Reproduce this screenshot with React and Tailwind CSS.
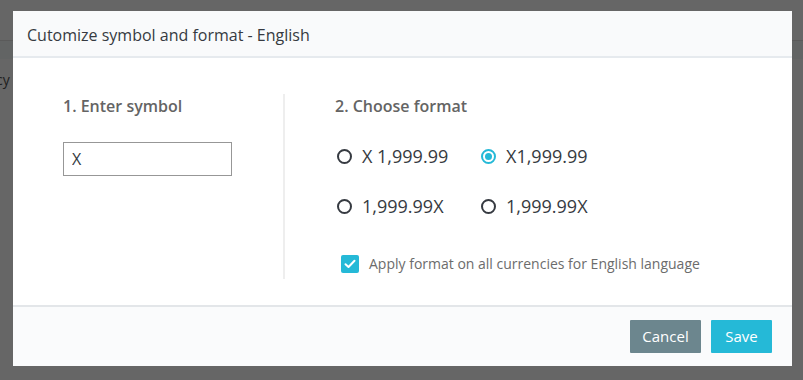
import { useState } from 'react';

const formats = [
  { id: 'x-space', label: 'X 1,999.99' },
  { id: 'x', label: 'X1,999.99' },
  { id: 'suffix', label: '1,999.99X' },
  { id: 'suffix-space', label: '1,999.99X' },
];

function Radio({ checked, label, onClick }) {
  return (
    <button onClick={onClick} className="h-[18px] flex items-center gap-[10px] text-[18px] text-[#363a41] leading-none">
      <span
        className={`w-[15px] h-[15px] rounded-full border-2 flex items-center justify-center ${
          checked ? 'border-[#25b9d7]' : 'border-[#363a41]'
        }`}
      >
        {checked && <span className="w-[7px] h-[7px] rounded-full bg-[#25b9d7]" />}
      </span>
      <span>{label}</span>
    </button>
  );
}

export default function App() {
  const [format, setFormat] = useState('x');
  const [symbol, setSymbol] = useState('X');
  const [applyAll, setApplyAll] = useState(true);

  return (
    <div className="relative w-[803px] h-[380px] overflow-hidden bg-[#666666] font-['Open_Sans',sans-serif]">
      {/* page behind the overlay */}
      <div className="pt-[40px]">
        <div className="h-[19px] border-t border-[#5a5a5a] bg-[#626464]" />
        <p className="pt-[10px] text-[14px] text-[#202020] -ml-[4px]">cy</p>
      </div>

      <div className="absolute left-[13px] top-[11px] w-[779px] h-[355px] bg-white flex flex-col">
        <div className="h-[47px] bg-[#f9fafb] border-b-2 border-[#e6eaee] flex items-center px-[14px]">
          <h2 className="text-[16px] text-[#363a41] pt-[2px]">Cutomize symbol and format - English</h2>
        </div>

        <div className="flex-1 flex pt-[36px] pb-[26px]">
          <div className="w-[272px] border-r-2 border-[#eeeeee] pl-[50px] pt-[2px]">
            <h3 className="text-[16px] font-semibold text-[#646464] leading-[20px]">1. Enter symbol</h3>
            <input
              value={symbol}
              onChange={(e) => setSymbol(e.target.value)}
              className="mt-[26px] w-[169px] h-[34px] border border-[#979797] px-[8px] text-[16px] text-[#363a41] outline-none"
            />
          </div>

          <div className="flex-1 pl-[50px] pt-[2px]">
            <h3 className="text-[16px] font-semibold text-[#646464] leading-[20px]">2. Choose format</h3>
            <div className="mt-[31px] grid grid-cols-[144px_auto] gap-y-[32px] pl-[2px] justify-start">
              {formats.map((f) => (
                <Radio key={f.id} label={f.label} checked={format === f.id} onClick={() => setFormat(f.id)} />
              ))}
            </div>
            <label className="mt-[39px] ml-[6px] flex items-center gap-[10px] text-[14px] leading-[20px] text-[#6c6c6c] cursor-pointer">
              <button
                onClick={() => setApplyAll(!applyAll)}
                className={`w-[18px] h-[18px] rounded-[2px] flex items-center justify-center ${
                  applyAll ? 'bg-[#25b9d7]' : 'border border-[#bbcdd2] bg-white'
                }`}
              >
                {applyAll && (
                  <svg width="12" height="10" viewBox="0 0 12 10" fill="none">
                    <path d="M1.5 5.2 4.5 8 10.5 1.8" stroke="white" strokeWidth="2" strokeLinecap="round" strokeLinejoin="round" />
                  </svg>
                )}
              </button>
              Apply format on all currencies for English language
            </label>
          </div>
        </div>

        <div className="h-[61px] border-t-2 border-[#e3e6e9] bg-[#fafbfc] flex items-center justify-end gap-[10px] pr-[20px] pb-[1px]">
          <button className="h-[33px] w-[71px] rounded-[1px] bg-[#6c868e] text-white text-[15px]">Cancel</button>
          <button className="h-[33px] w-[61px] rounded-[1px] bg-[#25b9d7] text-white text-[15px]">Save</button>
        </div>
      </div>
    </div>
  );
}
